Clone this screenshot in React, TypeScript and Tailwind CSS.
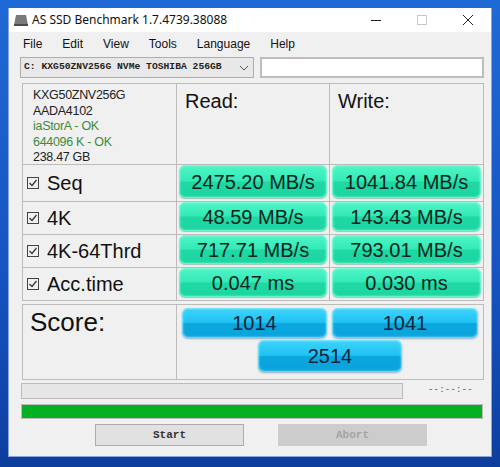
import React from "react";

const sans = { fontFamily: '"Liberation Sans", Arial, sans-serif' };
const mono = { fontFamily: '"Liberation Mono", "Courier New", monospace' };

function Check() {
  return (
    <svg width="12" height="12" viewBox="0 0 12 12" className="shrink-0">
      <rect x="0.5" y="0.5" width="11" height="11" fill="none" stroke="#444" strokeWidth="1" />
      <path d="M2.5 6 L5 8.5 L9.5 3" fill="none" stroke="#333" strokeWidth="1.2" />
    </svg>
  );
}

function Green({ v }: { v: string }) {
  return (
    <div className="h-full w-full rounded-[6px] flex items-center justify-center text-[20px] text-[#0c241d] bg-[linear-gradient(to_bottom,#52f4c8_0%,#32eab6_48%,#1fd9a4_52%,#1cd49f_100%)] shadow-[inset_0_0_2px_1px_rgba(140,255,220,0.9),0_1px_1px_rgba(0,120,90,0.35)]" style={sans}>
      {v}
    </div>
  );
}

function Blue({ v, w }: { v: string; w: string }) {
  return (
    <div className={`${w} h-full rounded-[6px] flex items-center justify-center text-[20px] text-[#0b2438] bg-[linear-gradient(to_bottom,#3fd4fa_0%,#1fc2f2_48%,#0aa7de_52%,#0ba3db_100%)] shadow-[inset_0_0_2px_1px_rgba(150,235,255,0.9),0_1px_2px_rgba(0,90,150,0.4)]`} style={sans}>
      {v}
    </div>
  );
}

const rows = [
  { label: "Seq", r: "2475.20 MB/s", w: "1041.84 MB/s", h: "h-[37px]" },
  { label: "4K", r: "48.59 MB/s", w: "143.43 MB/s", h: "h-[33px]" },
  { label: "4K-64Thrd", r: "717.71 MB/s", w: "793.01 MB/s", h: "h-[33px]" },
  { label: "Acc.time", r: "0.047 ms", w: "0.030 ms", h: "h-[33px]" },
];

export default function App() {
  return (
    <div className="w-[500px] h-[467px] overflow-hidden bg-[linear-gradient(to_bottom,#1f6ad6,#1553c0_60%,#0d3e9e)] pt-[8px] px-[8px]">
      <div className="w-[484px] h-[449px] bg-[#f0f0f0] flex flex-col border-l border-r border-b border-[#8aa6d8]">
        {/* title bar */}
        <div className="h-[24px] bg-white flex items-center shrink-0">
          <svg width="16" height="14" viewBox="0 0 16 14" className="ml-[4px]">
            <path d="M3 2 L13 2 L15 12 L1 12 Z" fill="#7a7a7a" />
            <rect x="1" y="11" width="14" height="2" fill="#4a4a4a" />
          </svg>
          <span className="ml-[3px] text-[12px] text-[#111]" style={{ fontFamily: '"Noto Sans", "Open Sans", sans-serif' }}>
            AS SSD Benchmark 1.7.4739.38088
          </span>
          <div className="ml-auto flex items-center">
            <svg width="46" height="24" viewBox="0 0 46 24">
              <path d="M18 12.5 H28" stroke="#222" strokeWidth="1" />
            </svg>
            <svg width="46" height="24" viewBox="0 0 46 24">
              <rect x="18.5" y="7.5" width="9" height="9" fill="none" stroke="#c8c8c8" strokeWidth="1" />
            </svg>
            <svg width="46" height="24" viewBox="0 0 46 24">
              <path d="M18 7 L28 17 M28 7 L18 17" stroke="#222" strokeWidth="1" />
            </svg>
          </div>
        </div>
        {/* menu */}
        <div className="h-[24px] flex items-center gap-[20px] pl-[14px] text-[12px] text-[#111] shrink-0" style={sans}>
          <span>File</span>
          <span>Edit</span>
          <span>View</span>
          <span>Tools</span>
          <span>Language</span>
          <span>Help</span>
        </div>
        {/* selectors */}
        <div className="flex mt-[1px] h-[21px] shrink-0">
          <div className="ml-[11px] w-[234px] h-full border border-[#adadad] bg-[#e8e8e8] flex items-center pl-[3px] text-[9.7px] font-bold text-[#222]" style={mono}>
            <span>C: KXG50ZNV256G NVMe TOSHIBA 256GB</span>
            <svg width="10" height="6" viewBox="0 0 10 6" className="ml-auto mr-[4px]">
              <path d="M1 1 L5 5 L9 1" fill="none" stroke="#555" strokeWidth="1" />
            </svg>
          </div>
          <div className="ml-[6px] w-[224px] h-full border-2 border-[#bdbdbd] bg-white" />
        </div>
        {/* table */}
        <div className="mt-[5px] ml-[13px] w-[462px] border-l border-t border-[#bcbcbc] grid grid-cols-[154px_153px_154px] shrink-0">
          <div className="h-[81px] border-r border-b border-[#bcbcbc] pl-[10px] pt-[4px] text-[12.5px] leading-[15.5px] text-[#222] tracking-[-0.3px]" style={sans}>
            <div>KXG50ZNV256G</div>
            <div>AADA4102</div>
            <div className="text-[#3c8a3c]">iaStorA - OK</div>
            <div className="text-[#3c8a3c]">644096 K - OK</div>
            <div>238.47 GB</div>
          </div>
          <div className="h-[81px] border-r border-b border-[#bcbcbc] pl-[8px] pt-[2px] text-[20px] text-[#111]" style={sans}>
            Read:
          </div>
          <div className="h-[81px] border-r border-b border-[#bcbcbc] pl-[8px] pt-[2px] text-[20px] text-[#111]" style={sans}>
            Write:
          </div>
          {rows.map((row) => (
            <React.Fragment key={row.label}>
              <div className={`${row.h} border-r border-b border-[#bcbcbc] flex items-center pl-[4px] gap-[8px] text-[20px] text-[#111]`} style={sans}>
                <Check />
                <span>{row.label}</span>
              </div>
              <div className={`${row.h} border-r border-b border-[#bcbcbc] px-[2px] pb-[3px]`}>
                <Green v={row.r} />
              </div>
              <div className={`${row.h} border-r border-b border-[#bcbcbc] px-[2px] pb-[3px]`}>
                <Green v={row.w} />
              </div>
            </React.Fragment>
          ))}
        </div>
        {/* score */}
        <div className="mt-[3px] ml-[13px] w-[462px] h-[76px] border border-[#bcbcbc] flex shrink-0">
          <div className="w-[154px] h-full border-r border-[#bcbcbc] pl-[7px] text-[26px] leading-[34px] text-[#111]" style={sans}>
            Score:
          </div>
          <div className="flex-1 pl-[5px] pt-[3px]">
            <div className="w-[296px] flex flex-col gap-[2px]">
              <div className="flex gap-[5px] h-[30px]">
                <Blue v="1014" w="w-[145px]" />
                <Blue v="1041" w="w-[146px]" />
              </div>
              <div className="flex justify-center h-[32px]">
                <Blue v="2514" w="w-[144px]" />
              </div>
            </div>
          </div>
        </div>
        {/* progress */}
        <div className="mt-[3px] ml-[12px] flex items-center h-[16px] shrink-0">
          <div className="w-[382px] h-full bg-[#e6e6e6] border border-[#bcbcbc]" />
          <span className="ml-[25px] text-[9px] text-[#555] tracking-[0.2px]" style={mono}>--:--:--</span>
        </div>
        <div className="mt-[5px] ml-[12px] w-[462px] h-[15px] bg-[#06b025] border border-[#bcbcbc] shrink-0" />
        {/* buttons */}
        <div className="mt-[5px] flex h-[22px] shrink-0">
          <div className="ml-[86px] w-[149px] h-full bg-[#e1e1e1] border border-[#adadad] flex items-center justify-center text-[11px] font-bold text-[#333]" style={mono}>
            Start
          </div>
          <div className="ml-[34px] w-[149px] h-full bg-[#cccccc] flex items-center justify-center text-[11px] font-bold text-[#a3a3a3]" style={mono}>
            Abort
          </div>
        </div>
      </div>
    </div>
  );
}
